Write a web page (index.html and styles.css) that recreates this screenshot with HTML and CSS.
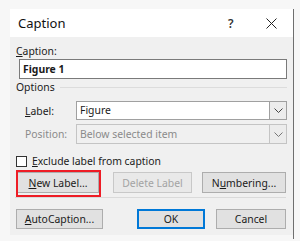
FILE: index.html
```html
<!DOCTYPE html>
<html lang="en">

<head>
  <meta charset="UTF-8" />
  <meta name="viewport" content="width=device-width, initial-scale=1.0" />
  <title>Caption</title>
  <link rel="stylesheet" href="styles.css">
</head>

<body>
  <div class="screen">
    <div class="dialog">
      <div class="titlebar">
        <span class="title">Caption</span>
        <span class="help">?</span>
        <span class="close">
          <svg width="11" height="11" viewBox="0 0 11 11">
            <path d="M0.5 0.5 L10.5 10.5 M10.5 0.5 L0.5 10.5" stroke="#222" stroke-width="1" fill="none" />
          </svg>
        </span>
      </div>

      <div class="content">
        <div class="field-label"><u>C</u>aption:</div>
        <div class="text-input">Figure 1</div>

        <div class="group-title">
          <span>Options</span>
          <span class="rule"></span>
        </div>

        <div class="option-row">
          <span class="opt-label"><u>L</u>abel:</span>
          <div class="select">
            <span class="select-value">Figure</span>
            <span class="select-arrow">
              <svg width="9" height="5" viewBox="0 0 9 5">
                <path d="M0.5 0.5 L4.5 4.5 L8.5 0.5" stroke="#444" stroke-width="1" fill="none" />
              </svg>
            </span>
          </div>
        </div>

        <div class="option-row disabled">
          <span class="opt-label">Position:</span>
          <div class="select">
            <span class="select-value">Below selected item</span>
            <span class="select-arrow">
              <svg width="9" height="5" viewBox="0 0 9 5">
                <path d="M0.5 0.5 L4.5 4.5 L8.5 0.5" stroke="#777" stroke-width="1" fill="none" />
              </svg>
            </span>
          </div>
        </div>

        <div class="check-row">
          <span class="checkbox"></span>
          <span><u>E</u>xclude label from caption</span>
        </div>

        <div class="btn-row">
          <button class="btn btn-new highlighted"><u>N</u>ew Label...</button>
          <button class="btn btn-delete" disabled>Delete Label</button>
          <button class="btn btn-numbering">N<u>u</u>mbering...</button>
        </div>

        <div class="separator"></div>

        <div class="btn-row bottom-row">
          <button class="btn btn-auto"><u>A</u>utoCaption...</button>
          <button class="btn btn-ok">OK</button>
          <button class="btn btn-cancel">Cancel</button>
        </div>
      </div>
    </div>
  </div>
</body>

</html>
```

FILE: styles.css
```css
body {
  margin: 0;
  font-family: "Noto Sans", "Open Sans", sans-serif;
  font-size: 10.4px;
  color: #1a1a1a;
  background-color: #f7f7f7;
}

.screen {
  padding: 9px 0 0 10px;
}

.dialog {
  width: 283px;
  border-right: 1px solid #6f6f6f;
  padding-bottom: 4px;
}

/* Barra de titulo */
.titlebar {
  height: 28px;
  background-color: #ffffff;
  display: flex;
  align-items: center;
  padding-left: 8px;
}

.title {
  flex: 1;
  font-size: 13px;
  color: #111;
}

.help {
  font-size: 12px;
  font-weight: 600;
  color: #333;
  width: 38px;
}

.close {
  width: 27px;
  display: flex;
  align-items: center;
}

.content {
  background-color: #f0f0f0;
  padding: 7px 6px 6px 6px;
}

.field-label {
  line-height: 14px;
}

.text-input {
  margin: 1px 0 0 3px;
  height: 20px;
  box-sizing: border-box;
  border: 1px solid #7a7a7a;
  background-color: #fff;
  font-weight: 700;
  line-height: 18px;
  padding-left: 3px;
}

.group-title {
  display: flex;
  align-items: center;
  margin-top: 1px;
  height: 14px;
}

.group-title .rule {
  flex: 1;
  height: 1px;
  background-color: #dcdcdc;
  margin-left: 5px;
}

.option-row {
  display: flex;
  align-items: center;
  margin-top: 7px;
}

.option-row.disabled {
  margin-top: 4px;
  color: #8a8a8a;
}

.opt-label {
  width: 51px;
  padding-left: 9px;
}

.select {
  flex: 1;
  display: flex;
  height: 19px;
  box-sizing: border-box;
  border: 1px solid #a0a0a0;
  background-color: #fff;
}

.disabled .select {
  height: 20px;
  border-color: #c4c4c4;
  background-color: #f0f0f0;
}

.select-value {
  flex: 1;
  line-height: 17px;
  padding-left: 3px;
}

.disabled .select-value {
  line-height: 18px;
}

.select-arrow {
  width: 16px;
  border-left: 1px solid #a0a0a0;
  background-color: #ececec;
  display: flex;
  align-items: center;
  justify-content: center;
}

.disabled .select-arrow {
  border-left-color: #c4c4c4;
}

.check-row {
  display: flex;
  align-items: center;
  margin-top: 10px;
  gap: 5px;
}

.checkbox {
  width: 11px;
  height: 11px;
  box-sizing: border-box;
  border: 1px solid #333;
  background-color: #fff;
}

.btn-row {
  display: flex;
  margin-top: 4px;
}

.btn {
  height: 21px;
  box-sizing: border-box;
  border: 1px solid #adadad;
  background-color: #e1e1e1;
  font-family: inherit;
  font-size: 10.4px;
  color: #1a1a1a;
  padding: 0;
  position: relative;
}

.btn-new {
  width: 82px;
  margin-left: 1px;
}

.btn-delete {
  width: 79px;
  margin-left: 14px;
  color: #a3a3a3;
  background-color: #e9e9e9;
  border-color: #c8c8c8;
}

.btn-numbering {
  width: 84px;
  margin-left: 10px;
}

/* Destaque vermelho em volta do botao */
.highlighted::after {
  content: "";
  position: absolute;
  left: -2px;
  top: -3px;
  right: -3px;
  bottom: -5px;
  border: 2px solid #ee1c25;
}

.separator {
  height: 1px;
  background-color: #dadada;
  margin: 4px 1px 0 -1px;
}

.bottom-row {
  margin-top: 11px;
}

.bottom-row .btn {
  height: 20px;
}

.btn-auto {
  width: 87px;
}

.btn-ok {
  width: 68px;
  margin-left: 34px;
  border: 2px solid #0078d7;
}

.btn-cancel {
  width: 70px;
  margin-left: 11px;
}
```
